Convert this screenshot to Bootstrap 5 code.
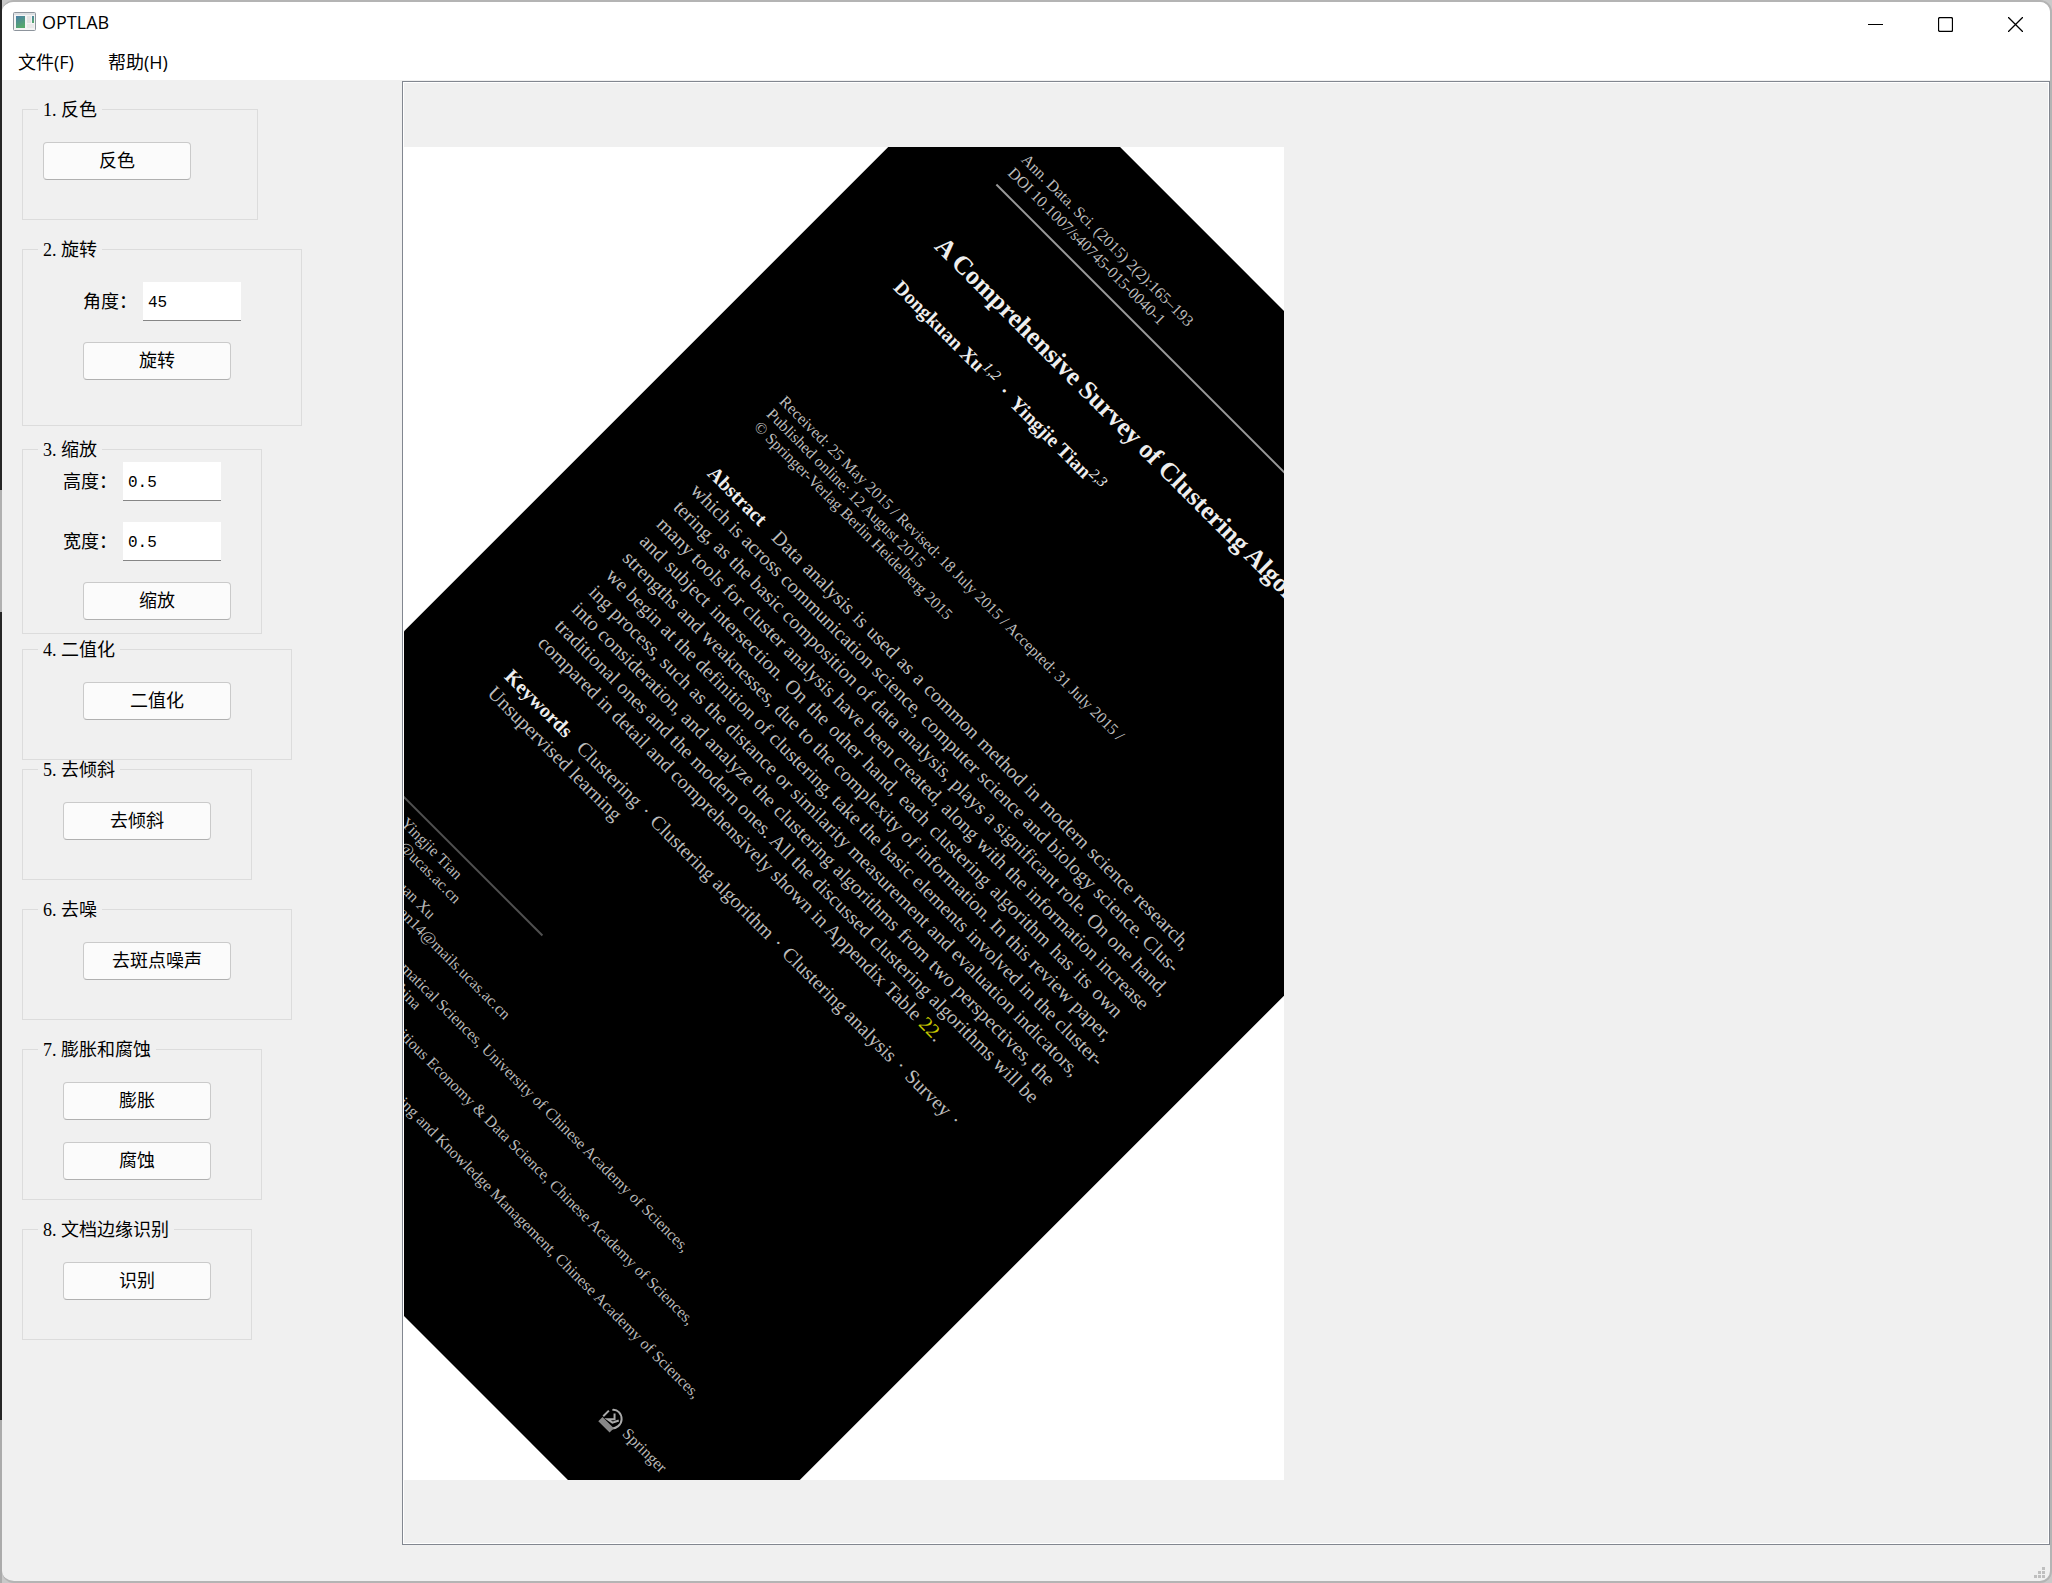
<!DOCTYPE html>
<html lang="zh-CN">
<head>
<meta charset="utf-8">
<meta name="viewport" content="width=device-width, initial-scale=1">
<title>OPTLAB</title>
<link href="https://cdn.jsdelivr.net/npm/bootstrap@5.3.0/dist/css/bootstrap.min.css" rel="stylesheet">
<style>
  body {
    background: linear-gradient(#262626 0 490px, #b0b0b0 490px 612px, #262626 612px 1420px, #ababab 1420px) left / 2px 100% no-repeat #c9c9c9;
    font-family: "Liberation Serif", "Noto Sans CJK SC", sans-serif;
    font-size: 18px;
    line-height: 24px;
    color: #000;
  }
  .app-window {
    min-height: 100vh;
    margin-left: 2px;
    border: 2px solid #b4b4b4;
    border-left: 0;
    border-radius: 12px;
    background: #f0f0f0;
    overflow: hidden;
  }
  .title-bar, .menu-bar { background: #fff; font-family: "Open Sans", "Noto Sans CJK SC", sans-serif; }
  .title-bar { height: 41px; padding-left: 11px; gap: 6px; }
  .title-bar h1 { font-size: 18px; line-height: 24px; font-weight: 400; }
  .title-bar button { width: 70px; height: 40px; border: 0; background: none; padding: 0; }
  .menu-bar { height: 37px; padding: 0 16px; gap: 34px; }
  .menu-bar a { color: #000; text-decoration: none; }

  .tool-panel { width: 400px; padding: 20px 0 20px 20px; }
  .tool-group {
    border: 1px solid #dcdcdc;
    padding: 23px 0 39px;
    margin-bottom: 20px;
    display: flex;
    flex-direction: column;
    align-items: flex-start;
    gap: 22px;
  }
  .tool-group legend {
    float: none;
    width: auto;
    margin: 0 0 0 15px;
    padding: 2px 5px 0;
    font-size: 18px;
    line-height: 17px;
  }
  .indent-1 > :not(legend) { margin-left: 20px; }
  .indent-2 > :not(legend) { margin-left: 40px; }
  .indent-3 > :not(legend) { margin-left: 60px; }
  .w-narrow { width: 230px; }
  .w-first { width: 236px; }
  .w-mid { width: 240px; }
  .w-wide { width: 270px; }
  .w-widest { width: 280px; }
  .rotate-group { padding-bottom: 45px; gap: 21px; margin-bottom: 14px; }
  .scale-group { padding-top: 3px; padding-bottom: 13px; gap: 21px; margin-bottom: 6px; }
  .scale-group > .btn.btn { margin-left: 60px; }
  .binary-group { margin-bottom: 0; }
  .morph-group { padding-bottom: 19px; }
  .tool-group .btn {
    width: 148px;
    height: 38px;
    padding: 0;
    font-size: 18px;
    line-height: 24px;
    color: #000;
    background: #fbfbfb;
    border: 1px solid #cacaca;
    border-bottom-color: #b0b0b0;
    border-radius: 4px;
  }
  .field-row { height: 39px; }
  .field-row label { width: 60px; }
  .field-row .form-control {
    width: 98px;
    height: 39px;
    padding: 4px 5px 0;
    font: 16px/24px "Liberation Mono", monospace;
    color: #000;
    background: #fff;
    border: 0;
    border-bottom: 1px solid #868686;
    border-radius: 0;
  }

  .view-frame {
    margin-top: 1px;
    border: 1px solid #828790;
    box-shadow: inset 0 0 0 1px #fff;
    padding: 1px;
  }
  .scan-view { position: relative; width: 880px; height: 1333px; background: #fff; overflow: hidden; }
  .status-bar { height: 36px; padding: 0 4px 2px 0; }

  /* Rotated page of the opened document */
  .sheet {
    width: 880px;
    height: 1333px;
    padding: 65px 103px 0;
    background: #000;
    color: #bcbcbc;
    font-family: "Liberation Serif", serif;
    font-size: 16px;
    line-height: 18px;
    white-space: nowrap;
    transform: rotate(45deg);
  }
  .sheet p { margin: 0; }
  .sheet-head { line-height: 19px; }
  .sheet-rule { border-top: 2px solid #999; margin-top: 10px; }
  .sheet h2 { font-size: 26px; line-height: 32px; font-weight: 700; color: #eee; margin: 64px 0 0; }
  .sheet .authors { font-size: 20px; line-height: 24px; font-weight: 700; color: #eee; margin-top: 31px; }
  .authors sup { font-size: 15px; line-height: 12px; font-style: italic; font-weight: 400; }
  .authors i { font-style: normal; margin: 0 5px; }
  .keywords i { font-style: normal; margin: 0 2px; }
  .history { margin-top: 142px; }
  .abstract, .keywords { font-size: 20px; line-height: 24px; }
  .abstract { margin-top: 43px; }
  .abstract p { text-align-last: justify; }
  .abstract p:last-child { text-align-last: left; }
  .abstract b, .keywords b { color: #eee; margin-right: 10px; }
  .abstract a { color: #c8c800; text-decoration: none; }
  .keywords { margin-top: 23px; }
  .footnotes { display: block; margin-top: 121px; margin-left: -103px; }
</style>
<script src="https://cdn.jsdelivr.net/npm/bootstrap@5.3.0/dist/js/bootstrap.bundle.min.js"></script>
</head>
<body>
<div class="app-window d-flex flex-column">
  <header class="title-bar d-flex align-items-start">
    <svg class="mt-2" width="23" height="23" viewBox="0 0 23 23" aria-hidden="true">
      <defs><linearGradient id="pane" x1="0" y1="0" x2="0.4" y2="1"><stop offset="0" stop-color="#4a7fa8"/><stop offset="1" stop-color="#56a86c"/></linearGradient></defs>
      <rect x="0.5" y="2.5" width="22" height="18" rx="1" fill="#f4f4f4" stroke="#8d949c"/>
      <path d="M1 4h21" stroke="#c6ccd2"/>
      <rect x="3" y="6" width="9" height="12" fill="url(#pane)"/>
      <rect x="14" y="6" width="4" height="7" fill="#e3e3e3"/><rect x="19" y="6" width="2" height="7" fill="url(#pane)"/>
      <rect x="14" y="14" width="7" height="4" fill="#e9e9e9"/>
    </svg>
    <h1 class="mb-0 mt-2">OPTLAB</h1>
    <div class="ms-auto d-flex">
      <button type="button" aria-label="最小化"><svg width="15" height="15" viewBox="0 0 15 15"><path d="M0 7.5h15" stroke="#000"/></svg></button>
      <button type="button" aria-label="最大化"><svg width="15" height="15" viewBox="0 0 15 15"><rect x="0.5" y="0.5" width="14" height="14" rx="1.5" fill="none" stroke="#000" stroke-width="1.3"/></svg></button>
      <button type="button" aria-label="关闭"><svg width="15" height="15" viewBox="0 0 15 15"><path d="M0 0l15 15M15 0L0 15" stroke="#000" stroke-width="1.3"/></svg></button>
    </div>
  </header>
  <nav class="menu-bar d-flex align-items-center">
    <a href="#">文件(F)</a>
    <a href="#">帮助(H)</a>
  </nav>

  <main class="d-flex flex-grow-1">
    <form class="tool-panel flex-shrink-0">
      <fieldset class="tool-group w-first indent-1">
        <legend>1. 反色</legend>
        <button type="button" class="btn">反色</button>
      </fieldset>
      <fieldset class="tool-group w-widest rotate-group indent-3">
        <legend>2. 旋转</legend>
        <div class="field-row d-flex align-items-center"><label for="angle">角度：</label><input id="angle" class="form-control" type="text" value="45"></div>
        <button type="button" class="btn">旋转</button>
      </fieldset>
      <fieldset class="tool-group w-mid scale-group indent-2">
        <legend>3. 缩放</legend>
        <div class="field-row d-flex align-items-center"><label for="height">高度：</label><input id="height" class="form-control" type="text" value="0.5"></div>
        <div class="field-row d-flex align-items-center"><label for="width">宽度：</label><input id="width" class="form-control" type="text" value="0.5"></div>
        <button type="button" class="btn">缩放</button>
      </fieldset>
      <fieldset class="tool-group w-wide binary-group indent-3">
        <legend>4. 二值化</legend>
        <button type="button" class="btn">二值化</button>
      </fieldset>
      <fieldset class="tool-group w-narrow indent-2">
        <legend>5. 去倾斜</legend>
        <button type="button" class="btn">去倾斜</button>
      </fieldset>
      <fieldset class="tool-group w-wide indent-3">
        <legend>6. 去噪</legend>
        <button type="button" class="btn">去斑点噪声</button>
      </fieldset>
      <fieldset class="tool-group w-mid morph-group indent-2">
        <legend>7. 膨胀和腐蚀</legend>
        <button type="button" class="btn">膨胀</button>
        <button type="button" class="btn">腐蚀</button>
      </fieldset>
      <fieldset class="tool-group w-narrow indent-2">
        <legend>8. 文档边缘识别</legend>
        <button type="button" class="btn">识别</button>
      </fieldset>
    </form>

    <section class="view-frame flex-grow-1 d-flex align-items-center">
      <div class="scan-view">
        <article class="sheet">
          <div class="sheet-head">
            <p>Ann. Data. Sci. (2015) 2(2):165–193</p>
            <p>DOI 10.1007/s40745-015-0040-1</p>
          </div>
          <div class="sheet-rule"></div>
          <h2>A Comprehensive Survey of Clustering Algor</h2>
          <p class="authors">Dongkuan Xu<sup>1,2</sup> <i>·</i> Yingjie Tian<sup>2,3</sup></p>
          <div class="history">
            <p>Received: 25 May 2015 / Revised: 18 July 2015 / Accepted: 31 July 2015 /</p>
            <p>Published online: 12 August 2015</p>
            <p>© Springer-Verlag Berlin Heidelberg 2015</p>
          </div>
          <div class="abstract">
            <p><b>Abstract</b> Data analysis is used as a common method in modern science research,</p>
            <p>which is across communication science, computer science and biology science. Clus-</p>
            <p>tering, as the basic composition of data analysis, plays a significant role. On one hand,</p>
            <p>many tools for cluster analysis have been created, along with the information increase</p>
            <p>and subject intersection. On the other hand, each clustering algorithm has its own</p>
            <p>strengths and weaknesses, due to the complexity of information. In this review paper,</p>
            <p>we begin at the definition of clustering, take the basic elements involved in the cluster-</p>
            <p>ing process, such as the distance or similarity measurement and evaluation indicators,</p>
            <p>into consideration, and analyze the clustering algorithms from two perspectives, the</p>
            <p>traditional ones and the modern ones. All the discussed clustering algorithms will be</p>
            <p>compared in detail and comprehensively shown in Appendix Table <a href="#">22</a>.</p>
          </div>
          <div class="keywords">
            <p><b>Keywords</b> Clustering <i>·</i> Clustering algorithm <i>·</i> Clustering analysis <i>·</i> Survey <i>·</i></p>
            <p>Unsupervised learning</p>
          </div>
          <svg class="footnotes" width="880" height="370" viewBox="0 960 880 370" fill="#b8b8b8" font-size="16">
            <path d="M103 965H313" stroke="#505050" stroke-width="2"/>
            <g text-anchor="end">
              <text x="213" y="987">Yingjie Tian</text>
              <text x="229" y="1005">@ucas.ac.cn</text>
              <text x="222" y="1034">Dongkuan Xu</text>
              <text x="346" y="1052">an14@mails.ucas.ac.cn</text>
              <text x="637" y="1090">Mathematical Sciences, University of Chinese Academy of Sciences,</text>
              <text x="276" y="1108">China</text>
              <text x="692" y="1138">Fictitious Economy &amp; Data Science, Chinese Academy of Sciences,</text>
              <text x="748" y="1186">Mining and Knowledge Management, Chinese Academy of Sciences,</text>
              <text x="777" y="1262">Springer</text>
            </g>
            <g stroke="#aaa" fill="none" stroke-width="2">
              <path d="M698 1251c3-4 9-4 13 0c4 4 3 11-1 14M702 1252l4 4l-5 5l6-1l3-6M696 1254v8"/>
              <path d="M697 1264h14v4h-14z" fill="#888" stroke="#888"/>
            </g>
          </svg>
        </article>
      </div>
    </section>
  </main>

  <footer class="status-bar d-flex justify-content-end align-items-end">
    <svg width="12" height="12" viewBox="0 0 12 12" fill="#bfbfbf" aria-hidden="true"><path d="M8 0h3v3h-3zM4 4h3v3h-3zM8 4h3v3h-3zM0 8h3v3h-3zM4 8h3v3h-3zM8 8h3v3h-3z"/></svg>
  </footer>
</div>
</body>
</html>
